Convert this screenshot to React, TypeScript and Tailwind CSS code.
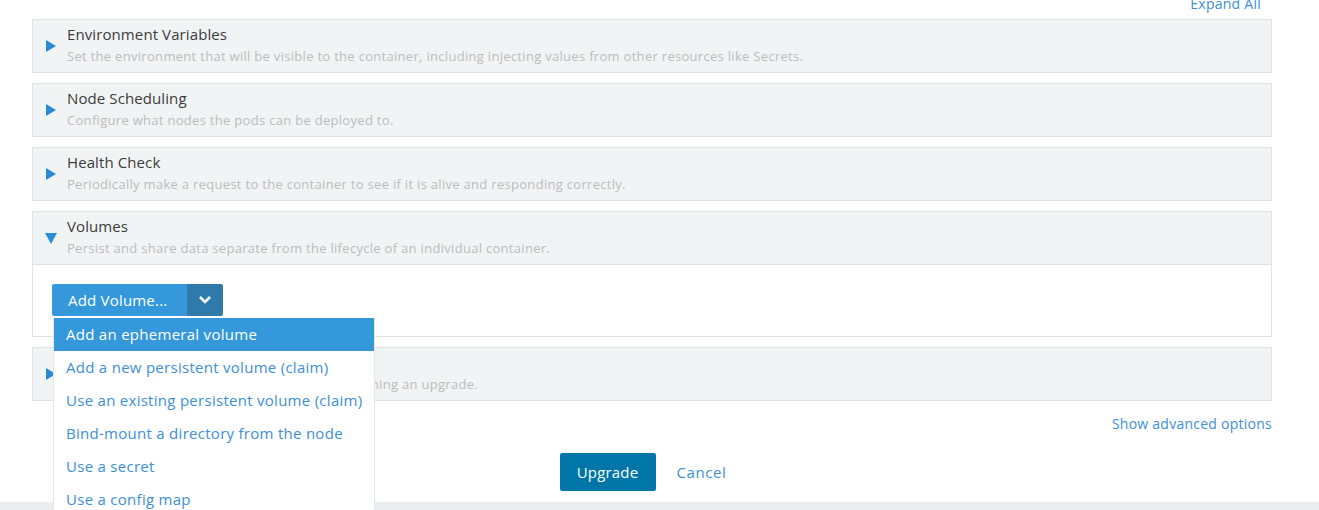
import React from "react";

const font = { fontFamily: "'Open Sans', 'Noto Sans', sans-serif" };

function Arrow({ open }: { open?: boolean }) {
  return open ? (
    <svg width="12" height="11" viewBox="0 0 12 11" className="shrink-0">
      <polygon points="0,0 12,0 6,11" fill="#2d8ad6" />
    </svg>
  ) : (
    <svg width="10" height="12" viewBox="0 0 10 12" className="shrink-0">
      <polygon points="0,0 10,6 0,12" fill="#2d8ad6" />
    </svg>
  );
}

function Header({ title, desc, open }: { title: string; desc: string; open?: boolean }) {
  return (
    <div className="flex items-center h-[52px] bg-[#f1f4f5]">
      <div className="w-[34px] flex justify-center pl-[2px]">
        <Arrow open={open} />
      </div>
      <div className="flex flex-col mt-[-2px]">
        <div className="text-[15px] leading-[20px] tracking-[0.1px] text-[#3c3c3c] mt-[-1px]">{title}</div>
        <div className="text-[13px] leading-[18px] mt-[3px] tracking-[0.3px] text-[#bcbcbc] whitespace-nowrap">
          {desc}
        </div>
      </div>
    </div>
  );
}

function Panel({ title, desc }: { title: string; desc: string }) {
  return (
    <div className="border border-[#dfe3e4] mb-[10px]">
      <Header title={title} desc={desc} />
    </div>
  );
}

const items = [
  "Add a new persistent volume (claim)",
  "Use an existing persistent volume (claim)",
  "Bind-mount a directory from the node",
  "Use a secret",
  "Use a config map",
];

export default function App() {
  return (
    <div style={font} className="w-[1319px] h-[510px] overflow-hidden bg-white relative">
      <div className="pl-[32px] pr-[47px]">
        <div className="flex justify-end pr-[11px] mt-[-5px] h-[24px]">
          <span className="text-[14px] leading-[18px] tracking-[0.25px] text-[#3d8fd6]">Expand All</span>
        </div>
        <Panel
          title="Environment Variables"
          desc="Set the environment that will be visible to the container, including injecting values from other resources like Secrets."
        />
        <Panel title="Node Scheduling" desc="Configure what nodes the pods can be deployed to." />
        <Panel
          title="Health Check"
          desc="Periodically make a request to the container to see if it is alive and responding correctly."
        />
        <div className="border border-[#dfe3e4] mb-[10px] relative">
          <Header
            open
            title="Volumes"
            desc="Persist and share data separate from the lifecycle of an individual container."
          />
          <div className="border-t border-[#dfe3e4] bg-white pt-[19px] pb-[20px] px-[19px]">
            <div className="relative inline-flex">
              <div className="flex h-[32px] rounded-[2px] overflow-hidden">
                <div className="w-[135px] bg-[#3498db] text-white text-[15px] tracking-[0.2px] flex items-center pl-[16px]">
                  Add Volume...
                </div>
                <div className="w-[36px] bg-[#2f79ab] flex items-center justify-center">
                  <svg width="14" height="10" viewBox="0 0 14 10">
                    <polyline points="2,2 7,7 12,2" fill="none" stroke="white" strokeWidth="2.6" />
                  </svg>
                </div>
              </div>
              <div className="absolute left-[1px] top-[34px] w-[322px] bg-white border border-[#e4e8ea] z-10 border-t-0">
                <div className="h-[33px] bg-[#3498db] text-white text-[15px] tracking-[0.28px] flex items-center pl-[12px]">
                  Add an ephemeral volume
                </div>
                {items.map((t) => (
                  <div
                    key={t}
                    className="h-[33px] text-[#3d8fd6] text-[15px] tracking-[0.28px] flex items-center pl-[12px]"
                  >
                    {t}
                  </div>
                ))}
              </div>
            </div>
          </div>
        </div>
        <Panel
          title="Scaling/Upgrade Policy"
          desc="Configure how to replace old pods when performing an upgrade."
        />
        <div className="flex justify-end mt-[11px]">
          <span className="text-[14px] leading-[24px] tracking-[0.25px] text-[#3d8fd6]">Show advanced options</span>
        </div>
        <div className="flex justify-center items-center mt-[17px] pr-[18px]">
          <div className="h-[38px] w-[96px] bg-[#0075a8] rounded-[2px] text-white text-[15px] tracking-[0.2px] flex items-center justify-center">
            Upgrade
          </div>
          <div className="ml-[21px] text-[#3d8fd6] text-[15px] tracking-[0.6px]">Cancel</div>
        </div>
      </div>
      <div className="absolute left-0 right-0 top-[502px] h-[8px] bg-[#ebeef0]" />
    </div>
  );
}
